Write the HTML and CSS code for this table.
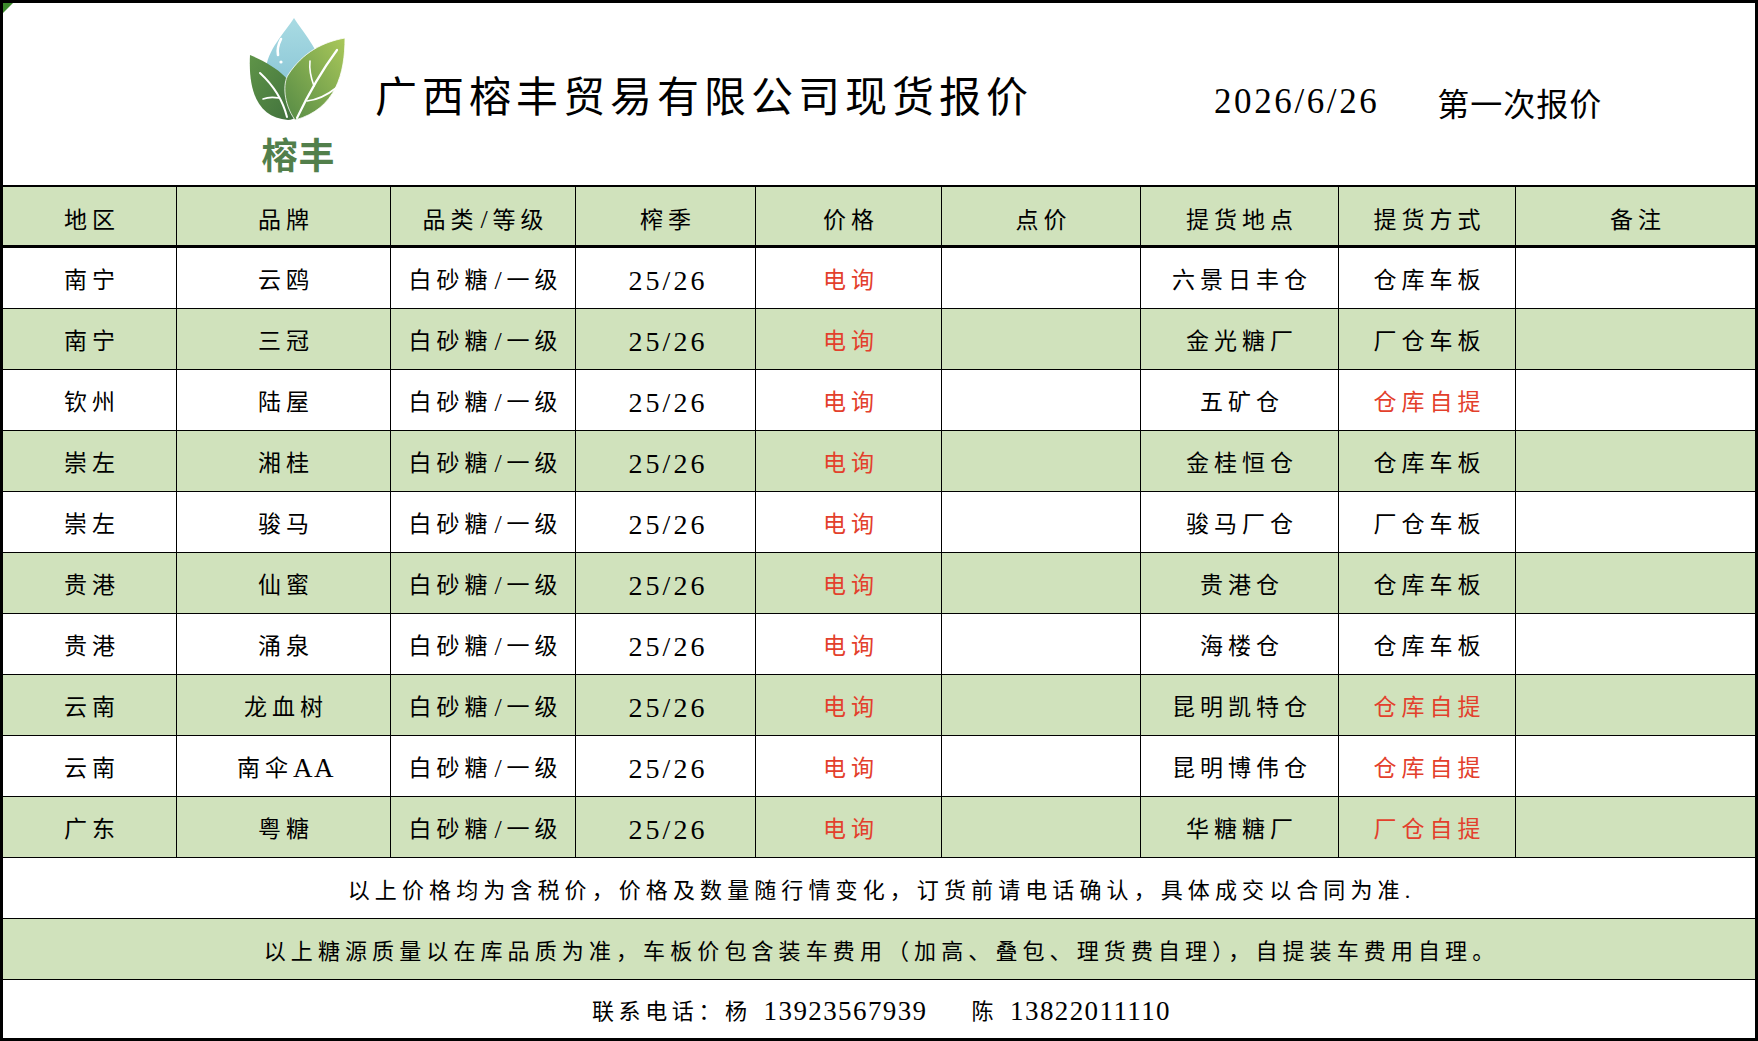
FILE: index.html
```html
<!DOCTYPE html>
<html lang="zh-CN">
<head>
<meta charset="utf-8">
<title>广西榕丰贸易有限公司现货报价</title>
<link rel="stylesheet" href="styles.css">
</head>
<body>
<div class="sheet">
  <span class="corner"></span>
  <div class="top">
    <div class="logo">
      <svg class="logo-mark" viewBox="0 0 100 104" width="100" height="104">
        <defs>
          <linearGradient id="gDrop" x1="0" y1="0" x2="0" y2="1">
            <stop offset="0" stop-color="#a9dbe3"/>
            <stop offset="1" stop-color="#86c3d4"/>
          </linearGradient>
          <linearGradient id="gLeft" x1="0" y1="0" x2="1" y2="1">
            <stop offset="0" stop-color="#5f9448"/>
            <stop offset="1" stop-color="#3f6f3c"/>
          </linearGradient>
          <linearGradient id="gRight" x1="1" y1="0" x2="0" y2="1">
            <stop offset="0" stop-color="#aac85a"/>
            <stop offset="1" stop-color="#558a45"/>
          </linearGradient>
        </defs>
        <path d="M46 1 C38 14 18 34 18 54 C18 70 31 80 45 80 C60 80 73 70 73 54 C73 34 54 14 46 1 Z" fill="url(#gDrop)"/>
        <path d="M33 22 C30 28 29 33 30 38" stroke="#ffffff" stroke-width="2.6" fill="none" stroke-linecap="round"/>
        <circle cx="33" cy="45" r="1.6" fill="#ffffff"/>
        <path d="M40 103 C12 101 0 78 2 38 C26 48 50 64 52 90 C52 98 47 103 40 103 Z" fill="url(#gLeft)"/>
        <path d="M47 103 C35 86 35 66 40 58 C55 35 75 25 97 21 C97 56 88 92 47 103 Z" fill="url(#gRight)" stroke="#ffffff" stroke-width="0.8"/>
        <path d="M39 100 C35 84 25 68 12 56" stroke="#ffffff" stroke-width="2" fill="none" stroke-linecap="round"/>
        <path d="M31 81 C25 80 20 80 15 82" stroke="#ffffff" stroke-width="1.6" fill="none" stroke-linecap="round"/>
        <path d="M49 101 C58 82 72 56 89 33" stroke="#ffffff" stroke-width="2.2" fill="none" stroke-linecap="round"/>
        <path d="M59 84 C68 83 78 79 88 71" stroke="#ffffff" stroke-width="1.7" fill="none" stroke-linecap="round"/>
        <path d="M66 69 C63 61 61 53 62 44" stroke="#ffffff" stroke-width="1.6" fill="none" stroke-linecap="round"/>
      </svg>
      <div class="logo-text">榕丰</div>
    </div>
    <div class="title">广西榕丰贸易有限公司现货报价</div>
    <div class="stamp">
      <span class="date">2026/6/26</span>
      <span class="round">第一次报价</span>
    </div>
  </div>

  <div class="row head green">
    <div class="cell">地区</div><div class="cell">品牌</div><div class="cell">品类<span class="slash">/</span>等级</div><div class="cell">榨季</div><div class="cell">价格</div><div class="cell">点价</div><div class="cell">提货地点</div><div class="cell">提货方式</div><div class="cell">备注</div>
  </div>

  <div class="row">
    <div class="cell">南宁</div><div class="cell">云鸥</div><div class="cell">白砂糖<span class="slash">/</span>一级</div><div class="cell"><span class="season">25/26</span></div><div class="cell red">电询</div><div class="cell"></div><div class="cell">六景日丰仓</div><div class="cell">仓库车板</div><div class="cell"></div>
  </div>
  <div class="row green">
    <div class="cell">南宁</div><div class="cell">三冠</div><div class="cell">白砂糖<span class="slash">/</span>一级</div><div class="cell"><span class="season">25/26</span></div><div class="cell red">电询</div><div class="cell"></div><div class="cell">金光糖厂</div><div class="cell">厂仓车板</div><div class="cell"></div>
  </div>
  <div class="row">
    <div class="cell">钦州</div><div class="cell">陆屋</div><div class="cell">白砂糖<span class="slash">/</span>一级</div><div class="cell"><span class="season">25/26</span></div><div class="cell red">电询</div><div class="cell"></div><div class="cell">五矿仓</div><div class="cell red">仓库自提</div><div class="cell"></div>
  </div>
  <div class="row green">
    <div class="cell">崇左</div><div class="cell">湘桂</div><div class="cell">白砂糖<span class="slash">/</span>一级</div><div class="cell"><span class="season">25/26</span></div><div class="cell red">电询</div><div class="cell"></div><div class="cell">金桂恒仓</div><div class="cell">仓库车板</div><div class="cell"></div>
  </div>
  <div class="row">
    <div class="cell">崇左</div><div class="cell">骏马</div><div class="cell">白砂糖<span class="slash">/</span>一级</div><div class="cell"><span class="season">25/26</span></div><div class="cell red">电询</div><div class="cell"></div><div class="cell">骏马厂仓</div><div class="cell">厂仓车板</div><div class="cell"></div>
  </div>
  <div class="row green">
    <div class="cell">贵港</div><div class="cell">仙蜜</div><div class="cell">白砂糖<span class="slash">/</span>一级</div><div class="cell"><span class="season">25/26</span></div><div class="cell red">电询</div><div class="cell"></div><div class="cell">贵港仓</div><div class="cell">仓库车板</div><div class="cell"></div>
  </div>
  <div class="row">
    <div class="cell">贵港</div><div class="cell">涌泉</div><div class="cell">白砂糖<span class="slash">/</span>一级</div><div class="cell"><span class="season">25/26</span></div><div class="cell red">电询</div><div class="cell"></div><div class="cell">海楼仓</div><div class="cell">仓库车板</div><div class="cell"></div>
  </div>
  <div class="row green">
    <div class="cell">云南</div><div class="cell">龙血树</div><div class="cell">白砂糖<span class="slash">/</span>一级</div><div class="cell"><span class="season">25/26</span></div><div class="cell red">电询</div><div class="cell"></div><div class="cell">昆明凯特仓</div><div class="cell red">仓库自提</div><div class="cell"></div>
  </div>
  <div class="row">
    <div class="cell">云南</div><div class="cell">南伞<span class="num">AA</span></div><div class="cell">白砂糖<span class="slash">/</span>一级</div><div class="cell"><span class="season">25/26</span></div><div class="cell red">电询</div><div class="cell"></div><div class="cell">昆明博伟仓</div><div class="cell red">仓库自提</div><div class="cell"></div>
  </div>
  <div class="row green">
    <div class="cell">广东</div><div class="cell">粤糖</div><div class="cell">白砂糖<span class="slash">/</span>一级</div><div class="cell"><span class="season">25/26</span></div><div class="cell red">电询</div><div class="cell"></div><div class="cell">华糖糖厂</div><div class="cell red">厂仓自提</div><div class="cell"></div>
  </div>

  <div class="note">以上价格均为含税价，价格及数量随行情变化，订货前请电话确认，具体成交以合同为准.</div>
  <div class="note green">以上糖源质量以在库品质为准，车板价包含装车费用（加高、叠包、理货费自理），自提装车费用自理。</div>
  <div class="note last">联系电话：杨<span class="num phone">13923567939</span><span class="gap"></span>陈<span class="num phone">13822011110</span></div>
</div>
</body>
</html>
```
FILE: styles.css
```css
html, body {
  margin: 0;
  padding: 0;
  background: #ffffff;
}

body {
  font-family: "Liberation Serif", "Noto Sans CJK SC", serif;
  color: #000000;
}

.sheet {
  position: relative;
  width: 1758px;
  height: 1041px;
  box-sizing: border-box;
  border: 3px solid #000000;
  display: flex;
  flex-direction: column;
  background: #ffffff;
}

.corner {
  position: absolute;
  left: 0;
  top: 0;
  width: 0;
  height: 0;
  border-top: 10px solid #3c8a2c;
  border-right: 10px solid transparent;
}

.top {
  height: 182px;
  flex: 0 0 auto;
  display: flex;
  align-items: flex-start;
}

.logo {
  margin-left: 245px;
  margin-top: 14px;
  width: 100px;
  display: flex;
  flex-direction: column;
  align-items: center;
}

.logo-mark {
  display: block;
}

.logo-text {
  margin-top: 12px;
  font-family: "Noto Sans CJK SC", sans-serif;
  font-weight: 700;
  font-size: 36px;
  line-height: 40px;
  color: #527f4b;
  letter-spacing: 1px;
  padding-left: 1px;
}

.title {
  margin-left: 27px;
  margin-top: 66px;
  width: 839px;
  font-family: "Noto Sans CJK SC", sans-serif;
  font-size: 42px;
  line-height: 50px;
  letter-spacing: 5px;
  white-space: nowrap;
}

.stamp {
  margin-top: 78px;
  display: flex;
  align-items: center;
  gap: 58px;
  white-space: nowrap;
}

.date {
  font-family: "Liberation Serif", serif;
  font-size: 35px;
  line-height: 40px;
  letter-spacing: 2.6px;
  padding-top: 1px;
}

.round {
  font-family: "Noto Sans CJK SC", sans-serif;
  font-size: 32px;
  line-height: 40px;
  letter-spacing: 1px;
}

.row {
  flex: 0 0 auto;
  display: grid;
  grid-template-columns: 174px 214px 185px 180px 186px 199px 198px 177px 1fr;
  height: 61px;
  box-sizing: border-box;
  border-bottom: 1px solid #000000;
}

.row.head {
  height: 63px;
  border-top: 2px solid #000000;
  border-bottom: 3px solid #000000;
}

.row.head .cell {
  padding-top: 8px;
}

.green {
  background: #d0e2bc;
}

.cell {
  box-sizing: border-box;
  border-right: 1px solid #000000;
  display: flex;
  align-items: center;
  justify-content: center;
  font-size: 23px;
  line-height: 1;
  letter-spacing: 5px;
  padding-left: 5px;
  padding-top: 5px;
  white-space: nowrap;
}

.cell:last-child {
  border-right: none;
}

.red {
  color: #e3402c;
}

.season {
  font-size: 28px;
  letter-spacing: 3px;
}

.slash {
  font-size: 26px;
  letter-spacing: 5px;
  padding-left: 2px;
}

.num {
  font-size: 27px;
  letter-spacing: 1.4px;
}

.phone {
  margin-left: 12px;
}

.note {
  flex: 0 0 auto;
  height: 61px;
  box-sizing: border-box;
  border-bottom: 1px solid #000000;
  display: flex;
  align-items: center;
  justify-content: center;
  font-size: 22px;
  line-height: 1;
  letter-spacing: 5.1px;
  padding-left: 5px;
  padding-top: 5px;
  white-space: nowrap;
}

.note.last {
  flex: 1 1 auto;
  height: auto;
  border-bottom: none;
  letter-spacing: 4.6px;
}

.gap {
  display: inline-block;
  width: 44px;
}
```
